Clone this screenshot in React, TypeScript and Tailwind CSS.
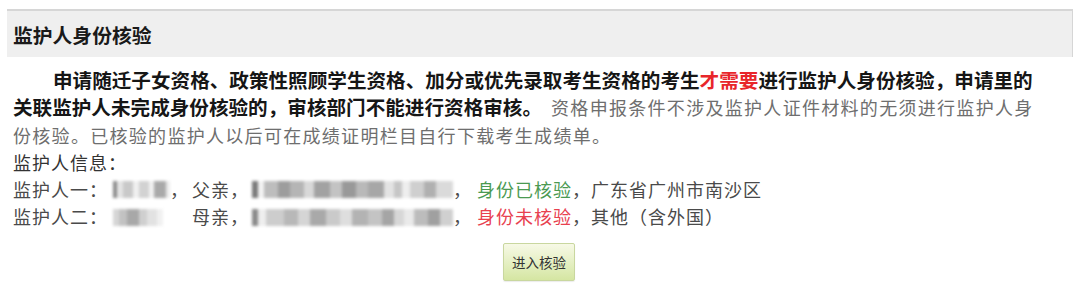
import React from 'react';

type Block = { w: number; c: string };

const nameOne: Block[] = [
  { w: 4, c: '#8a8a8a' },
  { w: 6, c: '#e4e4e4' },
  { w: 10, c: '#c9c9c9' },
  { w: 6, c: '#f0f0f0' },
  { w: 10, c: '#d2d2d2' },
  { w: 5, c: '#f2f2f2' },
  { w: 12, c: '#a9a9a9' },
  { w: 4, c: '#ececec' },
];

const nameTwo: Block[] = [
  { w: 6, c: '#d6d6d6' },
  { w: 8, c: '#c2c2c2' },
  { w: 12, c: '#a8a8a8' },
  { w: 8, c: '#cfcfcf' },
  { w: 10, c: '#e2e2e2' },
  { w: 6, c: '#f1f1f1' },
];

const idOne: Block[] = [
  { w: 6, c: '#7a7a7a' },
  { w: 6, c: '#f3f3f3' },
  { w: 14, c: '#bdbdbd' },
  { w: 12, c: '#9d9d9d' },
  { w: 14, c: '#b5b5b5' },
  { w: 10, c: '#d8d8d8' },
  { w: 16, c: '#a2a2a2' },
  { w: 12, c: '#c3c3c3' },
  { w: 14, c: '#999999' },
  { w: 12, c: '#b9b9b9' },
  { w: 16, c: '#a7a7a7' },
  { w: 10, c: '#e3e3e3' },
  { w: 8, c: '#c6c6c6' },
  { w: 8, c: '#eeeeee' },
  { w: 14, c: '#cfcfcf' },
  { w: 12, c: '#b0b0b0' },
  { w: 17, c: '#dadada' },
];

const idTwo: Block[] = [
  { w: 6, c: '#8a8a8a' },
  { w: 8, c: '#eeeeee' },
  { w: 18, c: '#cdcdcd' },
  { w: 14, c: '#b8b8b8' },
  { w: 12, c: '#d5d5d5' },
  { w: 16, c: '#a9a9a9' },
  { w: 14, c: '#cacaca' },
  { w: 12, c: '#dedede' },
  { w: 16, c: '#b3b3b3' },
  { w: 14, c: '#c4c4c4' },
  { w: 12, c: '#a5a5a5' },
  { w: 10, c: '#d7d7d7' },
  { w: 10, c: '#eaeaea' },
  { w: 14, c: '#bcbcbc' },
  { w: 12, c: '#a0a0a0' },
  { w: 13, c: '#d0d0d0' },
];

function Mosaic({ blocks }: { blocks: Block[] }) {
  return (
    <span className="inline-flex h-[17px] items-stretch overflow-hidden align-middle blur-[1.5px]">
      {blocks.map((b, i) => (
        <span key={i} style={{ width: b.w, backgroundColor: b.c }} />
      ))}
    </span>
  );
}

export default function App() {
  return (
    <div className="min-h-[287px] w-[1080px] bg-white font-['Noto_Sans_CJK_SC',sans-serif]">
      <div className="h-[9px]" />
      <div className="mx-[7px] flex h-[48px] items-center border-t-2 border-r border-[#d6d6d6] bg-[#efefef] pl-[6px] pt-[2px]">
        <h1 className="text-[19.8px] font-bold text-[#1a1a1a]">监护人身份核验</h1>
      </div>

      <div className="px-[13px] pt-[9px] text-[18px] leading-[27.3px] tracking-[1px] text-[#555]">
        <div className="whitespace-nowrap pl-[40px] text-[19.6px] font-bold tracking-normal text-[#161616]">
          申请随迁子女资格、政策性照顾学生资格、加分或优先录取考生资格的考生
          <span className="text-[#e8262b]">才需要</span>
          进行监护人身份核验，申请里的
        </div>
        <div className="whitespace-nowrap">
          <span className="text-[19.6px] font-bold tracking-normal text-[#161616]">
            关联监护人未完成身份核验的，审核部门不能进行资格审核。
          </span>
          <span className="pl-[9px] tracking-[1.3px] text-[#6e6e6e]">资格申报条件不涉及监护人证件材料的无须进行监护人身</span>
        </div>
        <div className="whitespace-nowrap tracking-[1.3px] text-[#6e6e6e]">份核验。已核验的监护人以后可在成绩证明栏目自行下载考生成绩单。</div>
        <div className="whitespace-nowrap text-[#333]">监护人信息：</div>
        <div className="flex items-center whitespace-nowrap text-[#4a4a4a]">
          <span>监护人一：</span>
          <span className="ml-[5px] flex w-[57px]">
            <Mosaic blocks={nameOne} />
          </span>
          <span className="w-[22px]">，</span>
          <span>父亲，</span>
          <span className="ml-[3px] flex w-[201px]">
            <Mosaic blocks={idOne} />
          </span>
          <span className="w-[24px]">，</span>
          <span className="text-[#4b9a52]">身份已核验</span>
          <span>，广东省广州市南沙区</span>
        </div>
        <div className="flex items-center whitespace-nowrap text-[#4a4a4a]">
          <span>监护人二：</span>
          <span className="ml-[5px] flex w-[50px]">
            <Mosaic blocks={nameTwo} />
          </span>
          <span className="w-[29px]" />
          <span>母亲，</span>
          <span className="ml-[3px] flex w-[201px]">
            <Mosaic blocks={idTwo} />
          </span>
          <span className="w-[24px]">，</span>
          <span className="text-[#e8414f]">身份未核验</span>
          <span>，其他（含外国）</span>
        </div>
      </div>

      <div className="flex justify-center pt-[12px]">
        <button className="ml-[-2px] flex h-[38px] w-[72px] items-center justify-center rounded-[2px] border border-[#c9d79f] bg-gradient-to-b from-[#f7f9e6] to-[#d5e6a2] text-[13.5px] text-[#333] shadow-[0_1px_1px_rgba(0,0,0,0.08)]">
          进入核验
        </button>
      </div>
    </div>
  );
}
